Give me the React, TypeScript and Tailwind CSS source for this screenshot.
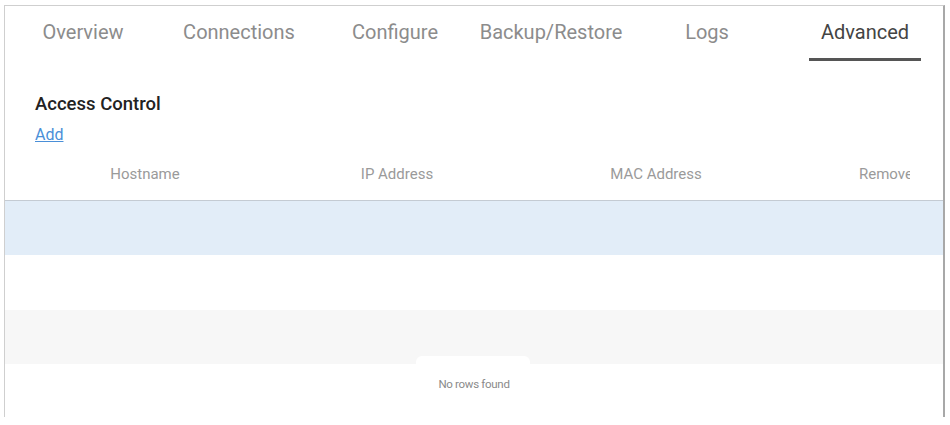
import React from "react";

const tabs = ["Overview", "Connections", "Configure", "Backup/Restore", "Logs", "Advanced"];

export default function App() {
  return (
    <div className="w-[950px] h-[425px] bg-white overflow-hidden" style={{ fontFamily: "Roboto, 'Liberation Sans', sans-serif" }}>
      <div className="ml-[4px] mt-[5px] w-[941px] h-[412px] border-t border-l border-[#cfcfcf] border-r-2 border-r-[#a8a8a8] flex flex-col">
        <div className="flex h-[55px] pr-[2px]">
          {tabs.map((t) => {
            const active = t === "Advanced";
            return (
              <div key={t} className="flex-1 flex justify-center">
                <div
                  className={`h-full flex items-center justify-center w-[112px] text-[20px] whitespace-nowrap ${
                    active ? "text-[#444] border-b-[3px] border-[#555] pb-[1px] translate-x-[2px]" : "text-[#8c8c8c] pb-[4px]"
                  }`}
                >
                  {t}
                </div>
              </div>
            );
          })}
        </div>
        <div className="pl-[30px] pt-[31px] text-[18.5px] font-medium text-[#222] leading-[24px]">Access Control</div>
        <div className="pl-[30px] pt-[8px] leading-[22px]">
          <a className="text-[16px] text-[#4a8fd8] underline">Add</a>
        </div>
        <div className="flex h-[55px] items-center text-[15px] text-[#9a9a9a] border-b border-[#c4cbd3] pt-[2px]">
          <div className="w-[280px] text-center">Hostname</div>
          <div className="w-[224px] text-center">IP Address</div>
          <div className="w-[294px] text-center">MAC Address</div>
          <div className="w-[107px] overflow-hidden whitespace-nowrap pl-[56px]">Remove</div>
        </div>
        <div className="h-[54px] bg-[#e2edf8]" />
        <div className="h-[55px] bg-white" />
        <div className="h-[54px] bg-[#f7f7f7] flex justify-center items-end">
          <div className="w-[114px] h-[8px] bg-white rounded-t-[6px] mr-[2px]" />
        </div>
        <div className="flex justify-center pt-[12px] text-[11.5px] text-[#8a8a8a] tracking-[-0.3px]">No rows found</div>
      </div>
    </div>
  );
}
